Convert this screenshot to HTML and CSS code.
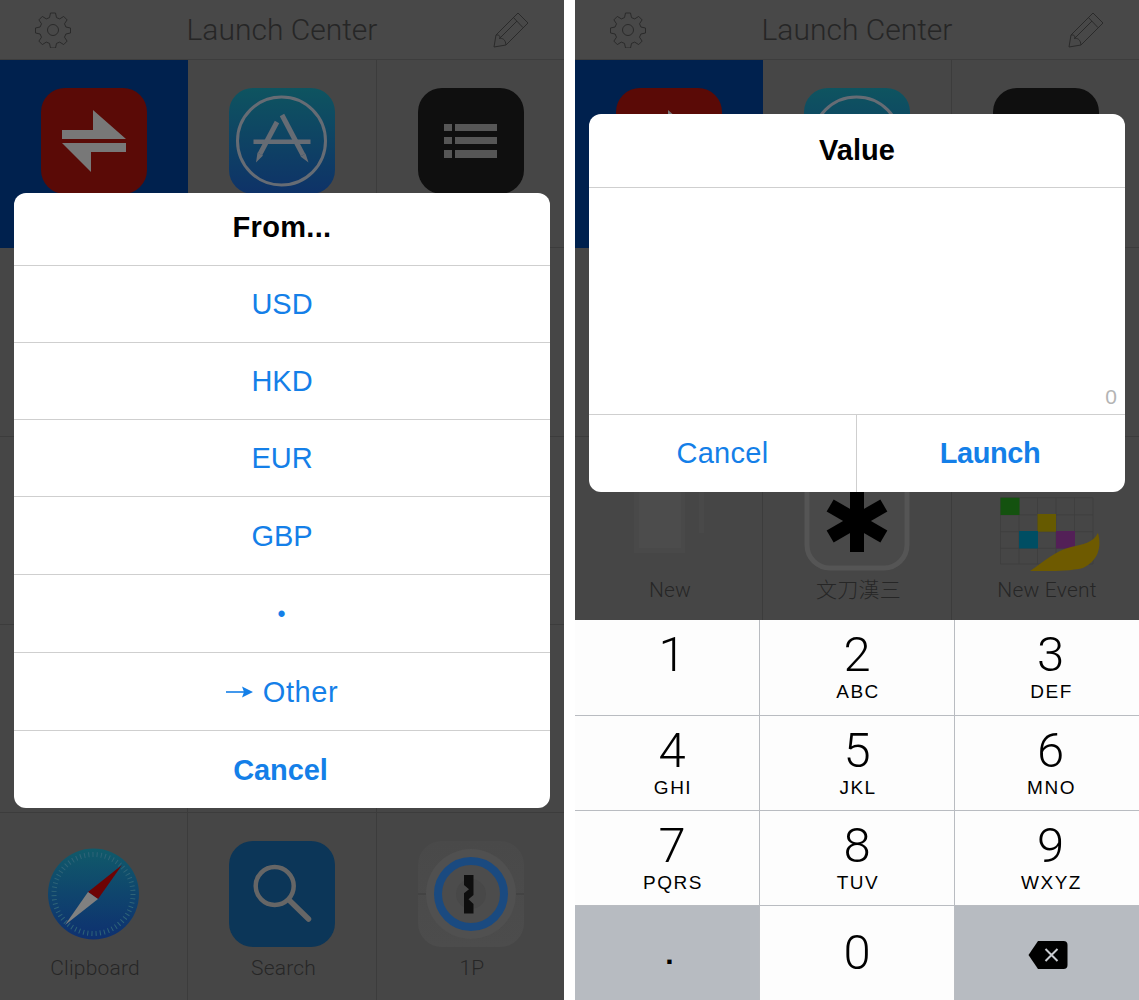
FILE: index.html
```html
<!DOCTYPE html>
<html lang="en">
<head>
<meta charset="utf-8">
<title>Launch Center</title>
<link rel="stylesheet" href="styles.css">
</head>
<body>
<main class="page">
  <section class="phone">
    <header class="nav">
      <svg class="nav-icon" viewBox="0 0 36 36"><use href="#gear"/></svg>
      <h1 class="nav-title">Launch Center</h1>
      <svg class="nav-icon" viewBox="0 0 36 36"><use href="#pencil"/></svg>
    </header>
    <div class="grid">
      <div class="cell cell-blue"><svg class="app" viewBox="0 0 106 106"><use href="#i-swap"/></svg></div>
      <div class="cell"><svg class="app" viewBox="0 0 106 106"><use href="#i-store"/></svg></div>
      <div class="cell"><svg class="app" viewBox="0 0 106 106"><use href="#i-list"/></svg></div>
      <div class="cell"></div><div class="cell"></div><div class="cell"></div>
      <div class="cell"></div><div class="cell"></div><div class="cell"></div>
      <div class="cell"></div><div class="cell"></div><div class="cell"></div>
      <div class="cell"><svg class="app" viewBox="0 0 106 106"><use href="#i-compass"/></svg><span class="label">Clipboard</span></div>
      <div class="cell"><svg class="app" viewBox="0 0 106 106"><use href="#i-search"/></svg><span class="label">Search</span></div>
      <div class="cell"><svg class="app" viewBox="0 0 106 106"><use href="#i-1p"/></svg><span class="label">1P</span></div>
    </div>
    <div class="sheet sheet-list">
      <div class="sheet-title list-title">From...</div>
      <div class="opt">USD</div>
      <div class="opt">HKD</div>
      <div class="opt">EUR</div>
      <div class="opt opt-tall">GBP</div>
      <div class="opt opt-tall opt-dot">•</div>
      <div class="opt opt-tall opt-arrow"><svg class="arrow" viewBox="0 0 27 12"><path d="M0 6h20" stroke="#147fe8" stroke-width="1.6"/><path d="M16 .5L27 6 16 11.500l2-5.500z" fill="#147fe8"/></svg>Other</div>
      <div class="opt opt-tall opt-bold">Cancel</div>
    </div>
  </section>

  <section class="phone">
    <header class="nav">
      <svg class="nav-icon" viewBox="0 0 36 36"><use href="#gear"/></svg>
      <h1 class="nav-title">Launch Center</h1>
      <svg class="nav-icon" viewBox="0 0 36 36"><use href="#pencil"/></svg>
    </header>
    <div class="grid grid-short">
      <div class="cell cell-blue"><svg class="app" viewBox="0 0 106 106"><use href="#i-swap"/></svg></div>
      <div class="cell"><svg class="app" viewBox="0 0 106 106"><use href="#i-store"/></svg></div>
      <div class="cell"><svg class="app" viewBox="0 0 106 106"><use href="#i-list"/></svg></div>
      <div class="cell"></div><div class="cell"></div><div class="cell"></div>
      <div class="cell"><svg class="app" viewBox="0 0 106 106"><use href="#i-new"/></svg><span class="label">New</span></div>
      <div class="cell"><svg class="app" viewBox="0 0 106 106"><use href="#i-star"/></svg><span class="label">文刀漢三</span></div>
      <div class="cell"><svg class="app" viewBox="0 0 106 106"><use href="#i-cal"/></svg><span class="label">New Event</span></div>
    </div>
    <div class="sheet sheet-value">
      <div class="sheet-title value-title">Value</div>
      <div class="value-body"><span class="count">0</span></div>
      <div class="value-actions">
        <div class="action action-left">Cancel</div>
        <div class="action action-bold">Launch</div>
      </div>
    </div>
    <div class="keypad">
      <div class="key"><b>1</b><i></i></div>
      <div class="key"><b>2</b><i>ABC</i></div>
      <div class="key"><b>3</b><i>DEF</i></div>
      <div class="key"><b>4</b><i>GHI</i></div>
      <div class="key"><b>5</b><i>JKL</i></div>
      <div class="key"><b>6</b><i>MNO</i></div>
      <div class="key"><b>7</b><i>PQRS</i></div>
      <div class="key"><b>8</b><i>TUV</i></div>
      <div class="key"><b>9</b><i>WXYZ</i></div>
      <div class="key key-gray key-dot">.</div>
      <div class="key key-zero"><b>0</b></div>
      <div class="key key-gray key-back">
        <svg class="back" viewBox="0 0 40 30"><path d="M10 1h25.500a4 4 0 0 1 4 4v20a4 4 0 0 1-4 4H10L.5 15z" fill="#000"/><path d="M17.500 9l12 12M29.500 9l-12 12" stroke="#c8cbd0" stroke-width="2" fill="none"/></svg>
      </div>
    </div>
  </section>
</main>

<svg class="defs" width="0" height="0" aria-hidden="true">
  <defs>
    <linearGradient id="g-store" x1="0" y1="0" x2="0" y2="1"><stop offset="0" stop-color="#0e5460"/><stop offset="1" stop-color="#0e3268"/></linearGradient>
    <linearGradient id="g-comp" x1="0" y1="0" x2="0" y2="1"><stop offset="0" stop-color="#105a6a"/><stop offset="1" stop-color="#0e3070"/></linearGradient>
    <linearGradient id="g-1p" x1="0" y1="0" x2="0" y2="1"><stop offset="0" stop-color="#494949"/><stop offset="1" stop-color="#4c4c4c"/></linearGradient>
    <g id="gear" fill="none" stroke="#2a2a2a" stroke-width="1" stroke-linejoin="round">
      <circle cx="18" cy="18" r="5.500"/>
      <path d="M15.500 1h5l1 4.600 3.200 1.300 4-2.500 3.400 3.500-2.600 3.900 1.400 3.200 4.600 1v5l-4.600 1-1.400 3.200 2.600 3.900-3.400 3.500-4-2.500-3.200 1.300-1 4.600h-5l-1-4.600-3.200-1.300-4 2.500-3.400-3.500 2.600-3.900-1.400-3.200-4.600-1v-5l4.600-1 1.400-3.200-2.600-3.900 3.400-3.500 4 2.500 3.200-1.300z"/>
    </g>
    <g id="pencil" fill="none" stroke="#2a2a2a" stroke-width="1" stroke-linejoin="round">
      <path d="M1 35l2-12L25 1l10 10L13 33z"/>
      <path d="M3 23c3-.5 4.500 1 3.500 3.500 2.500-.5 6 .5 6.500 6.500M20.500 5.600l9.500 10M6.500 26.500L24 9"/>
    </g>
    <g id="i-swap">
      <rect width="106" height="106" rx="24" fill="#5a0a06"/>
      <path d="M21 42h31V22l33 29H21zM21 55h64v9H50v20z" fill="#787878"/>
    </g>
    <g id="i-store">
      <rect width="106" height="106" rx="24" fill="url(#g-store)"/>
      <circle cx="52.500" cy="53" r="44" fill="none" stroke="#666c74" stroke-width="3"/>
      <path d="M24.500 51.500h57v4.500h-57z" fill="#666c74"/>
      <path d="M48 34L31 66" stroke="#666c74" stroke-width="5"/>
      <path d="M53 27l21 40" stroke="#666c74" stroke-width="5"/>
      <path d="M28.500 64.500l5.500 3-7 7zM76.500 65.500l-5 3 8 6z" fill="#666c74"/>
    </g>
    <g id="i-list">
      <rect width="106" height="106" rx="24" fill="#0f0f0f"/>
      <path d="M26 36h8v7h-8zM37 36h42v7H37zM26 49h8v7h-8zM37 49h42v7H37zM26 62h8v8h-8zM37 62h42v8H37z" fill="#565656"/>
    </g>
    <g id="i-compass">
      <circle cx="52.500" cy="53" r="45.500" fill="url(#g-comp)"/>
      <circle cx="52.500" cy="53" r="39.500" fill="none" stroke="#2f6478" stroke-width="5" stroke-dasharray="1 3.200"/>
      <path d="M81 24L57 58 47 51z" fill="#6e0304"/>
      <path d="M47 51l10 7L24 84z" fill="#808080"/>
    </g>
    <g id="i-search">
      <rect width="106" height="106" rx="24" fill="#0c3658"/>
      <circle cx="45.700" cy="45" r="19" fill="none" stroke="#666" stroke-width="4.500"/>
      <path d="M60 59l19.500 19" stroke="#666" stroke-width="5.500" stroke-linecap="round"/>
    </g>
    <g id="i-1p">
      <rect width="106" height="106" rx="24" fill="url(#g-1p)"/>
      <path d="M0 53h106" stroke="#3d3d3d"/>
      <circle cx="53" cy="53" r="45" fill="#505050"/>
      <circle cx="53" cy="53" r="33" fill="#4c4c4c" stroke="#1a4a80" stroke-width="8"/>
      <circle cx="53" cy="53" r="15" fill="#484848"/>
      <path d="M46 34h9.500v20l-5 4.300 5 4.700v9.500H46V52.300l5-4-5-4.300z" fill="#0e0e0e"/>
    </g>
    <g id="i-new">
      <rect x="18" y="10" width="51" height="78" fill="#494949"/>
      <rect x="23" y="10" width="42" height="73" fill="#4c4c4c"/>
      <rect x="83" y="10" width="5" height="58" fill="#494949"/>
    </g>
    <g id="i-star">
      <rect x="3" y="2" width="100" height="101" rx="23" fill="#494949" stroke="#555" stroke-width="5"/>
      <path d="M46 25h14v62H46z" fill="#000"/>
      <path d="M46 25h14v62H46z" fill="#000" transform="rotate(60 53 56)"/>
      <path d="M46 25h14v62H46z" fill="#000" transform="rotate(120 53 56)"/>
    </g>
    <g id="i-cal">
      <path d="M7.500 32.700V99M26 32.700V99M44.500 32.700V99M63 32.700V99M81.500 32.700V99M100 32.700V99M7.500 32.700H100M7.500 49.800H100M7.500 66.700H100M7.500 83.300H100M7.500 99H100" stroke="#3f3f3f" fill="none"/>
      <rect x="7.500" y="32.700" width="19" height="17.300" fill="#14520f"/>
      <rect x="44.500" y="49" width="18.500" height="17.700" fill="#665a00"/>
      <rect x="26" y="66" width="19" height="17.500" fill="#004e63"/>
      <rect x="63" y="66" width="19" height="17.500" fill="#532057"/>
      <path d="M37 106C52 96 62 86 78 82c12-3 22-4 27-14 4 14 0 28-15 35-16 4-40 3-53 3z" fill="#6e5a00"/>
    </g>
  </defs>
</svg>
</body>
</html>
```

FILE: styles.css
```css
* { box-sizing: border-box; }
html, body { margin: 0; padding: 0; background: #fff; }
body { font-family: "Liberation Sans", Arial, sans-serif; width: 1139px; height: 1000px; overflow: hidden; }
.page { display: flex; gap: 11px; height: 1000px; }
.phone { position: relative; flex: 0 0 564px; height: 1000px; overflow: hidden; background: #464646; }
.nav { height: 60px; display: flex; align-items: center; justify-content: space-between; padding: 0 35px; background: #484848; border-bottom: 1px solid #3d3d3d; }
.nav-icon { width: 36px; height: 36px; }
.nav-title { margin: 0; font-weight: 300; font-size: 30px; color: #262626; font-family: "Roboto", "Liberation Sans", sans-serif; }
.grid { display: grid; grid-template-columns: 188px 189px 187px; grid-auto-rows: 188.250px; }
.cell { position: relative; display: flex; flex-direction: column; align-items: center; padding-top: 28px; border-right: 1px solid #3c3c3c; border-bottom: 1px solid #3c3c3c; background: #464646; }
.cell:nth-child(3n) { border-right: 0; }
.cell-blue { background: #00214e; border-color: #00214e; }
.app { width: 106px; height: 106px; flex: none; overflow: visible; }
.label { margin-top: 8px; padding-left: 3px; font-size: 21px; font-weight: 300; letter-spacing: 0.2px; line-height: 26px; color: #262626; font-family: "Roboto", "Noto Sans CJK TC", sans-serif; }
.grid-short .label { margin-top: 6px; }
.sheet { position: absolute; left: 14px; width: 536px; background: #fff; border-radius: 12px; overflow: hidden; }
.sheet-list { top: 193px; height: 615px; display: flex; flex-direction: column; }
.sheet-title { height: 72px; display: flex; align-items: center; justify-content: center; font-size: 29px; font-weight: 700; color: #000; flex: none; }
.list-title { letter-spacing: 0.3px; padding-bottom: 4px; }
.opt { flex: 0 0 77px; display: flex; align-items: center; justify-content: center; gap: 10px; padding-top: 1px; font-size: 29px; color: #147fe8; border-top: 1px solid #cfcfcf; }
.opt-tall { flex-basis: 78px; }
.opt-dot { font-size: 23px; padding-right: 1px; }
.opt-arrow { letter-spacing: 0.6px; }
.arrow { width: 27px; height: 12px; flex: none; }
.opt-bold { font-weight: 700; padding-right: 3px; letter-spacing: -0.1px; }
.sheet-value { top: 114px; height: 378px; display: flex; flex-direction: column; }
.value-title { height: 73px; flex: none; }
.value-body { position: relative; height: 228px; flex: none; border-top: 1px solid #cfcfcf; border-bottom: 1px solid #cfcfcf; }
.count { position: absolute; right: 8px; bottom: 5px; font-size: 21px; color: #b4b4b4; }
.value-actions { display: flex; flex: 1; }
.action { display: flex; align-items: center; justify-content: center; font-size: 29px; color: #147fe8; }
.action-left { flex: 0 0 267px; letter-spacing: 0.3px; }
.action-bold { flex: 1; font-weight: 700; letter-spacing: -0.4px; padding-right: 2px; border-left: 1px solid #cfcfcf; }
.keypad { position: absolute; left: 0; right: 0; top: 620px; height: 380px; display: grid; grid-template-columns: 185px 195px 184px; grid-template-rows: repeat(4, 95px); background: #fcfcfc; }
.key { display: flex; flex-direction: column; align-items: center; border-right: 1px solid #b9bcc1; border-top: 1px solid #b9bcc1; color: #000; background: #fdfdfd; }
.key:nth-child(-n+3) { border-top: 0; }
.key:nth-child(3n) { border-right: 0; padding-left: 7px; }
.key:nth-child(3n+1) { padding-left: 10px; }
.key b { font-family: "Roboto", "Liberation Sans", sans-serif; font-weight: 300; font-size: 49px; line-height: 46px; margin-top: 12px; }
.key i { font-style: normal; font-size: 19px; line-height: 20px; letter-spacing: 1.500px; margin-top: 4px; margin-left: 2px; }
.key-gray { background: #b7bbc1; }
.key.key-dot { font-size: 30px; line-height: 30px; justify-content: center; padding-top: 2px; font-weight: 700; padding-left: 5px; }
.key-zero b { margin-top: 24px; }
.key.key-back { justify-content: center; padding-top: 3px; padding-left: 1px; }
.back { width: 40px; height: 30px; }
.defs { position: absolute; }
```
